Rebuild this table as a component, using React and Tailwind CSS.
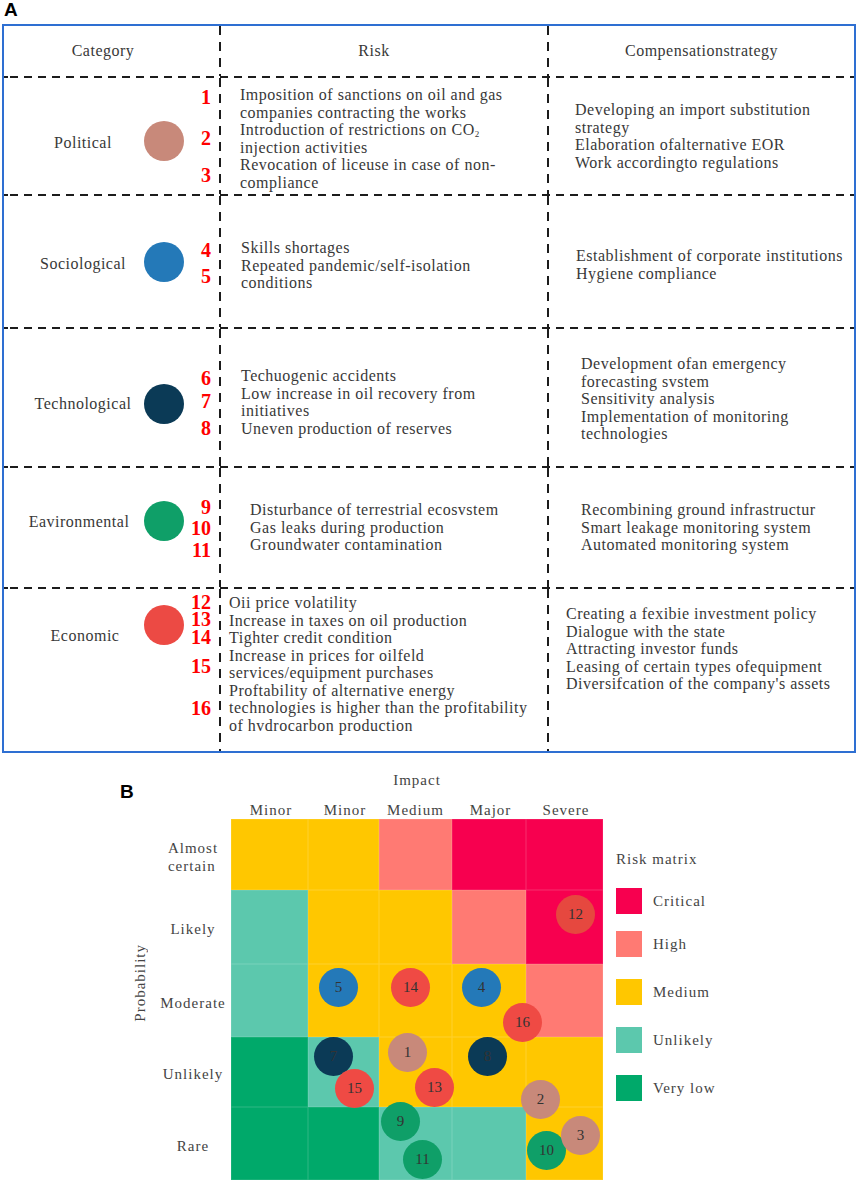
import React from "react";

const hDash =
  "h-[2px] w-full [background-image:repeating-linear-gradient(90deg,#1c1c1c_0px,#1c1c1c_8px,transparent_8px,transparent_14px)] bg-[position:6px_0]";
const vDash =
  "w-[2px] self-stretch shrink-0 [background-image:repeating-linear-gradient(180deg,#1c1c1c_0px,#1c1c1c_9px,transparent_9px,transparent_16px)]";

const rows = [
  {
    label: "Political",
    color: "bg-[#c8897a]",
    h: "h-[116px]",
    labelCls: "mt-[56px] pl-[18px]",
    circleCls: "mt-[43px]",
    nums: [
      ["1", "mt-[9px]"],
      ["2", "mt-[21px]"],
      ["3", "mt-[17px]"],
    ],
    riskCls: "pt-[8px] pl-[19px]",
    risk: [
      "Imposition of sanctions on oil and gas",
      "companies contracting the works",
      "CO2",
      "injection activities",
      "Revocation of liceuse in case of non-",
      "compliance",
    ],
    compCls: "pt-[23px] pl-[26px]",
    comp: [
      "Developing an import substitution",
      "strategy",
      "Elaboration ofalternative EOR",
      "Work accordingto regulations",
    ],
  },
  {
    label: "Sociological",
    color: "bg-[#2479b8]",
    h: "h-[131px]",
    labelCls: "mt-[59px] pl-[18px]",
    circleCls: "mt-[46px]",
    nums: [
      ["4", "mt-[44px]"],
      ["5", "mt-[6px]"],
    ],
    riskCls: "pt-[43px] pl-[20px]",
    risk: ["Skills shortages", "Repeated pandemic/self-isolation", "conditions"],
    compCls: "pt-[51px] pl-[27px]",
    comp: ["Establishment of corporate institutions", "Hygiene compliance"],
  },
  {
    label: "Technological",
    color: "bg-[#0b3a56]",
    h: "h-[137px]",
    labelCls: "mt-[66px] pl-[18px]",
    circleCls: "mt-[55px]",
    nums: [
      ["6", "mt-[39px]"],
      ["7", "mt-[3px]"],
      ["8", "mt-[7px]"],
    ],
    riskCls: "pt-[38px] pl-[20px]",
    risk: [
      "Techuogenic accidents",
      "Low increase in oil recovery from",
      "initiatives",
      "Uneven production of reserves",
    ],
    compCls: "pt-[26px] pl-[32px]",
    comp: [
      "Development ofan emergency",
      "forecasting svstem",
      "Sensitivity analysis",
      "Implementation of monitoring",
      "technologies",
    ],
  },
  {
    label: "Eavironmental",
    color: "bg-[#0f9f68]",
    h: "h-[119px]",
    labelCls: "mt-[45px] pl-[10px]",
    circleCls: "mt-[33px]",
    nums: [
      ["9", "mt-[29px]"],
      ["10", "mt-[1px]"],
      ["11", "mt-[2px]"],
    ],
    riskCls: "pt-[33px] pl-[29px]",
    risk: [
      "Disturbance of terrestrial ecosvstem",
      "Gas leaks during production",
      "Groundwater contamination",
    ],
    compCls: "pt-[33px] pl-[32px]",
    comp: [
      "Recombining ground infrastructur",
      "Smart leakage monitoring system",
      "Automated monitoring system",
    ],
  },
  {
    label: "Economic",
    color: "bg-[#ec4a44]",
    h: "h-[162px]",
    labelCls: "mt-[38px] pl-[22px]",
    circleCls: "mt-[16px]",
    numsLeading: "leading-[17px]",
    nums: [
      ["12", "mt-[5px]"],
      ["13", "mt-[0px]"],
      ["14", "mt-[1px]"],
      ["15", "mt-[12px]"],
      ["16", "mt-[25px]"],
    ],
    riskCls: "pt-[5px] pl-[8px]",
    risk: [
      "Oii price volatility",
      "Increase in taxes on oil production",
      "Tighter credit condition",
      "Increase in prices for oilfeld",
      "services/equipment purchases",
      "Proftability of alternative energy",
      "technologies is higher than the profitability",
      "of hvdrocarbon production",
    ],
    compCls: "pt-[16px] pl-[17px]",
    comp: [
      "Creating a fexibie investment policy",
      "Dialogue with the state",
      "Attracting investor funds",
      "Leasing of certain types ofequipment",
      "Diversifcation of the company's assets",
    ],
  },
];

function Line({ t }) {
  if (t === "CO2") {
    return (
      <div className="whitespace-nowrap">
        Introduction of restrictions on CO
        <sub className="text-[9px] leading-none">2</sub>
      </div>
    );
  }
  return <div className="whitespace-nowrap">{t}</div>;
}

function TableRow({ r }) {
  return (
    <div className={`flex ${r.h}`}>
      <div className="flex w-[215px] shrink-0 items-start">
        <div className={`w-[140px] shrink-0 text-center leading-[18px] ${r.labelCls}`}>
          {r.label}
        </div>
        <div className={`h-[40px] w-[40px] shrink-0 rounded-full ${r.color} ${r.circleCls}`} />
        <div
          className={`flex flex-1 flex-col items-end pr-[8px] font-bold text-[20px] tracking-normal text-[#ff0000] ${
            r.numsLeading || "leading-[20px]"
          }`}
        >
          {r.nums.map(([n, c]) => (
            <div key={n} className={c}>
              {n}
            </div>
          ))}
        </div>
      </div>
      <div className={vDash} />
      <div className={`w-[326px] shrink-0 leading-[17.5px] ${r.riskCls}`}>
        {r.risk.map((t) => (
          <Line key={t} t={t} />
        ))}
      </div>
      <div className={vDash} />
      <div className={`flex-1 leading-[17.5px] ${r.compCls}`}>
        {r.comp.map((t) => (
          <Line key={t} t={t} />
        ))}
      </div>
    </div>
  );
}

const C = {
  crit: "bg-[#f7004f]",
  high: "bg-[#ff7a73]",
  med: "bg-[#ffc700]",
  unl: "bg-[#5cc8ad]",
  vlow: "bg-[#00a96a]",
};

const matrix = [
  ["med", "med", "high", "crit", "crit"],
  ["unl", "med", "med", "high", "crit"],
  ["unl", "med", "med", "med", "high"],
  ["vlow", "unl", "med", "med", "med"],
  ["vlow", "vlow", "unl", "unl", "med"],
];

const dots = [
  ["12", "bg-[#e6483f]", "left-[325px] top-[76px]"],
  ["5", "bg-[#2479b8]", "left-[88px] top-[149px]"],
  ["14", "bg-[#ef4a44]", "left-[160px] top-[149px]"],
  ["4", "bg-[#2479b8]", "left-[231px] top-[149px]"],
  ["16", "bg-[#ef4a44]", "left-[272px] top-[184px]"],
  ["7", "bg-[#0b3a56]", "left-[83px] top-[218px]"],
  ["1", "bg-[#c8897a]", "left-[157px] top-[214px]"],
  ["8", "bg-[#0b3a56]", "left-[237px] top-[218px]"],
  ["15", "bg-[#ef4a44]", "left-[104px] top-[250px]"],
  ["13", "bg-[#ef4a44]", "left-[184px] top-[249px]"],
  ["2", "bg-[#c8897a]", "left-[290px] top-[261px]"],
  ["9", "bg-[#0f9f68]", "left-[150px] top-[283px]"],
  ["11", "bg-[#0f9f68]", "left-[172px] top-[321px]"],
  ["10", "bg-[#0f9f68]", "left-[296px] top-[312px]"],
  ["3", "bg-[#c8897a]", "left-[330px] top-[297px]"],
];

const rowLabels = [
  ["h-[71px]", <span className="inline-block text-left">Almost<br />certain</span>],
  ["h-[74px]", "Likely"],
  ["h-[73px]", "Moderate"],
  ["h-[70px]", "Unlikely"],
  ["h-[73px]", "Rare"],
];

const legend = [
  ["Critical", C.crit, "mt-[20px]"],
  ["High", C.high, "mt-[17px]"],
  ["Medium", C.med, "mt-[22px]"],
  ["Unlikely", C.unl, "mt-[22px]"],
  ["Very low", C.vlow, "mt-[22px]"],
];

export default function App() {
  return (
    <div className="h-[1182px] w-[858px] overflow-hidden bg-white font-['Liberation_Serif',serif] text-[16px] tracking-[0.5px] text-[#383838]">
      {/* Panel A */}
      <div className="h-[24px] pl-[4px] font-['Liberation_Sans',sans-serif] text-[19px] font-bold leading-[19px] tracking-normal text-black">
        A
      </div>
      <div className="ml-[2px] w-[854px] border-2 border-[#2e6fd2]">
        <div className="flex h-[50px] items-center">
          <div className="w-[215px] shrink-0 pr-[17px] text-center">Category</div>
          <div className={vDash} />
          <div className="w-[326px] shrink-0 pr-[20px] text-center">Risk</div>
          <div className={vDash} />
          <div className="flex-1 text-center">Compensationstrategy</div>
        </div>
        {rows.map((r) => (
          <React.Fragment key={r.label}>
            <div className={hDash} />
            <TableRow r={r} />
          </React.Fragment>
        ))}
      </div>

      {/* Panel B */}
      <div className="flex h-[66px] items-start text-[15px] tracking-[1px] text-[#444]">
        <div className="w-[231px] shrink-0 pl-[120px] pt-[29px] font-['Liberation_Sans',sans-serif] text-[19px] font-bold leading-[19px] tracking-normal text-black">
          B
        </div>
        <div className="flex w-[372px] shrink-0 flex-col pt-[18px] leading-[18px]">
          <div className="text-center">Impact</div>
          <div className="mt-[12px] flex">
            <div className="w-[80px] text-center">Minor</div>
            <div className="w-[68px] text-center">Minor</div>
            <div className="w-[73px] text-center">Medium</div>
            <div className="w-[77px] text-center">Major</div>
            <div className="w-[74px] text-center">Severe</div>
          </div>
        </div>
      </div>
      <div className="flex text-[15px] tracking-[1px] text-[#444]">
        <div className="w-[125px] shrink-0" />
        <div className="flex h-[328px] w-[30px] shrink-0 items-center justify-center">
          <div className="rotate-180 leading-[18px] [writing-mode:vertical-rl]">Probability</div>
        </div>
        <div className="flex w-[76px] shrink-0 flex-col leading-[18px]">
          {rowLabels.map(([h, t], i) => (
            <div key={i} className={`${h} flex items-center justify-center pt-[4px]`}>
              {t}
            </div>
          ))}
        </div>
        <div className="relative grid h-[361px] w-[372px] shrink-0 grid-cols-[77px_71px_73px_74px_77px] grid-rows-[71px_74px_73px_70px_73px]">
          {matrix.flat().map((k, i) => (
            <div key={i} className={`${C[k]} shadow-[inset_0_0_0_0.5px_rgba(255,255,255,0.18)]`} />
          ))}
          {dots.map(([n, bg, pos]) => (
            <div
              key={n}
              className={`absolute flex h-[39px] w-[39px] items-center justify-center rounded-full text-[15px] tracking-normal text-[#333] ${bg} ${pos}`}
            >
              {n}
            </div>
          ))}
        </div>
        <div className="ml-[13px] flex flex-col pt-[31px] leading-[18px]">
          <div>Risk matrix</div>
          {legend.map(([t, bg, mt]) => (
            <div key={t} className={`flex items-center ${mt}`}>
              <div className={`h-[26px] w-[26px] shrink-0 ${bg}`} />
              <div className="ml-[11px]">{t}</div>
            </div>
          ))}
        </div>
      </div>
    </div>
  );
}
